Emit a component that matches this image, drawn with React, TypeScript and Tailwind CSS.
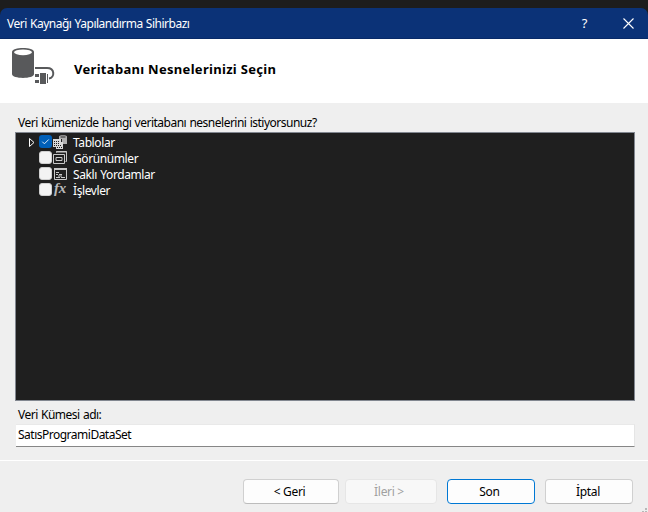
import React from 'react';

function Check({ checked }: { checked?: boolean }) {
  return (
    <span className={`flex h-[13px] w-[13px] shrink-0 items-center justify-center rounded-[3px] ${checked ? 'bg-[#005fb8]' : 'border border-[#d0d0d0] bg-[#f3f3f3]'}`}>
      {checked && (
        <svg width="13" height="13" viewBox="0 0 13 13" fill="none" stroke="#d8e8f7" strokeWidth="1">
          <path d="M3.3 6.7 5.4 8.8 9.7 4.5" />
        </svg>
      )}
    </span>
  );
}

function TablesIcon() {
  return (
    <svg width="15" height="14" viewBox="0 0 15 14">
      <path d="M6 1.5C6-.2 14-.2 14 1.5V9H9V4H6Z" fill="#b0b0b0" />
      <path d="M7.5 1.5h5v1h-5z" fill="#2b2b2b" />
      <path d="M0 4h8v3h2v7H3v-2H0Z" fill="#d8d8d8" />
      <path d="M1 6.5h6M1 8.5h6M1 10.5h8M4 12.5h5" stroke="#1f1f1f" strokeWidth="1" strokeDasharray="1 1" />
    </svg>
  );
}

function ViewsIcon() {
  return (
    <svg width="15" height="14" viewBox="0 0 15 14" fill="none" stroke="#c8c8c8">
      <path d="M3.5 1.5v-1h10v10h-1M.5 3.5h11v9H.5z" />
      <path d="M3 1h11M3 6.5h6v3H3z" />
    </svg>
  );
}

function ProcsIcon() {
  return (
    <svg width="15" height="14" viewBox="0 0 15 14" fill="none" stroke="#c8c8c8">
      <path d="M1.5 1.5h12v11h-12z" />
      <path d="M1 2h13" strokeWidth="2" />
      <path d="M3 5.5h3M3 7.5h2M6 7.5h3M3 10.5h4M8 10.5h4M5 9h4" />
    </svg>
  );
}

const rows = [
  { label: 'Tablolar', icon: <TablesIcon />, checked: true },
  { label: 'Görünümler', icon: <ViewsIcon />, checked: false },
  { label: 'Saklı Yordamlar', icon: <ProcsIcon />, checked: false },
  {
    label: 'İşlevler',
    icon: <span className="-mt-px pl-px font-['Liberation_Serif',serif] text-[15px] font-bold leading-[13px] tracking-[-0.3px] italic text-[#b8b8b8]">fx</span>,
    checked: false,
  },
];

export default function App() {
  return (
    <div className="flex h-[512px] w-[648px] flex-col overflow-hidden bg-[#1d1d1d] pt-2 font-['Noto_Sans','Open_Sans',sans-serif] text-[12px] leading-4 tracking-[-0.5px] [word-spacing:0.6px] text-black">
      <header className="flex h-[31px] shrink-0 items-center rounded-t-[7px] border-b border-[#082a68] bg-[#0b3277] pl-[7px] text-white">
        <span className="mt-px whitespace-nowrap">Veri Kaynağı Yapılandırma Sihirbazı</span>
        <span className="ml-auto mr-[36px] text-[13px]">?</span>
        <svg className="mr-[14px]" width="11" height="11" viewBox="0 0 11 11" stroke="#fff" strokeWidth="1.1">
          <path d="m.5.5 10 10m0-10-10 10" />
        </svg>
      </header>

      <section className="flex h-16 shrink-0 items-start bg-white pl-3 pt-[9px]">
        <svg width="43" height="37" viewBox="0 0 43 37" fill="#58595b">
          <path d="M0 4C0-1.2 22-1.2 22 4v22c0 5.2-22 5.2-22 0Z" />
          <ellipse cx="11" cy="4.3" rx="9" ry="2.9" fill="#fff" />
          <path d="M23 20h12c8 0 8 9.5 2 10.5" fill="none" stroke="#58595b" strokeWidth="2" />
          <path d="M22 25h6v11h-6z" fill="#fff" />
          <path d="M23 26h4v3h-4zM23 32h4v3h-4zM28 25h6v11h-6zM35 26h1v9h-1z" />
        </svg>
        <h1 className="ml-[19px] mt-[12px] whitespace-nowrap text-[13px] font-bold leading-[18px] tracking-[0.3px] [word-spacing:0]">Veritabanı Nesnelerinizi Seçin</h1>
      </section>

      <main className="flex h-[357px] shrink-0 flex-col bg-[#efefef] pl-[15px] pr-[13px] pt-[12px]">
        <label className="ml-[3px] h-[17px] whitespace-nowrap">Veri kümenizde hangi veritabanı nesnelerini istiyorsunuz?</label>
        <div className="h-[269px] shrink-0 border border-[#828790] bg-[#1f1f1f] pt-[2px] tracking-[-0.4px] text-white">
          {rows.map((r) => (
            <div key={r.label} className="flex h-4 items-start pl-[13px]">
              <svg className="mr-[4px] mt-[3px]" width="6" height="9" viewBox="0 0 6 9" fill="none" stroke={r.checked ? '#fff' : 'none'}>
                <path d="M.5.5v8l4.5-4Z" />
              </svg>
              <Check checked={r.checked} />
              <span className="ml-px flex w-5 items-start">{r.icon}</span>
              <span className="whitespace-nowrap">{r.label}</span>
            </div>
          ))}
        </div>
        <label className="ml-[3px] mt-[6px] h-[17px]">Veri Kümesi adı:</label>
        <div className="ml-px h-[23px] border-b border-r border-t border-b-[#868686] border-r-[#e5e5e5] border-t-[#e9e9e9] bg-white pl-[2px] pt-[2px]">SatısProgramiDataSet</div>
      </main>

      <footer className="relative flex h-[52px] shrink-0 border-t border-white bg-[#efefef] pl-[243px] pt-[18px] tracking-[-0.3px] [word-spacing:1px]">
        <button className="h-[25px] w-[96px] rounded-[4px] border border-[#d0d0d0] border-b-[#bcbcbc] bg-[#fdfdfd] pr-[3px]">&lt; Geri</button>
        <button className="ml-[6px] h-[25px] w-[92px] rounded-[4px] border border-[#e6e6e6] bg-[#f8f8f8] pr-[4px] text-[#a0a0a0]">İleri &gt;</button>
        <button className="ml-[10px] h-[25px] w-[88px] rounded-[4px] border border-[#0078d4] bg-[#fdfdfd] pr-[3px]">Son</button>
        <button className="ml-[10px] h-[25px] w-[88px] rounded-[4px] border border-[#d0d0d0] border-b-[#bcbcbc] bg-[#fdfdfd] pr-[2px]">İptal</button>
        <svg className="absolute bottom-0 right-0" width="6" height="4" fill="#b8b8b8">
          <path d="M3 0h2v2H3zM0 3h2v1H0zM3 3h2v1H3z" />
        </svg>
      </footer>
    </div>
  );
}
